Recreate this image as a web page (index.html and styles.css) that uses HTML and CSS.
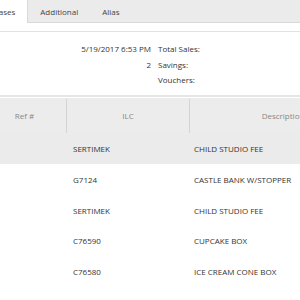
FILE: index.html
```html
<!DOCTYPE html>
<html>
<head>
<meta charset="utf-8">
<link rel="stylesheet" href="styles.css">
</head>
<body>
<div class="page">
  <div class="tabs">
    <div class="tab active">Purchases</div>
    <div class="tab">Additional</div>
    <div class="tab">Alias</div>
  </div>
  <div class="info">
    <div class="info-values">
      <div>5/19/2017 6:53 PM</div>
      <div>2</div>
      <div>&nbsp;</div>
    </div>
    <div class="info-labels">
      <div>Total Sales:</div>
      <div>Savings:</div>
      <div>Vouchers:</div>
    </div>
  </div>
  <div class="grid">
    <div class="row head">
      <div class="cell c-ref">Ref #</div>
      <div class="cell c-ilc">ILC</div>
      <div class="cell c-desc">Description</div>
    </div>
    <div class="row selected">
      <div class="cell c-ref"></div>
      <div class="cell c-ilc">SERTIMEK</div>
      <div class="cell c-desc">CHILD STUDIO FEE</div>
    </div>
    <div class="row">
      <div class="cell c-ref"></div>
      <div class="cell c-ilc">G7124</div>
      <div class="cell c-desc">CASTLE BANK W/STOPPER</div>
    </div>
    <div class="row">
      <div class="cell c-ref"></div>
      <div class="cell c-ilc">SERTIMEK</div>
      <div class="cell c-desc">CHILD STUDIO FEE</div>
    </div>
    <div class="row">
      <div class="cell c-ref"></div>
      <div class="cell c-ilc">C76590</div>
      <div class="cell c-desc">CUPCAKE BOX</div>
    </div>
    <div class="row">
      <div class="cell c-ref"></div>
      <div class="cell c-ilc">C76580</div>
      <div class="cell c-desc">ICE CREAM CONE BOX</div>
    </div>
  </div>
</div>
</body>
</html>
```
FILE: styles.css
```css
html, body {
  margin: 0;
  padding: 0;
  background: #ffffff;
}
body {
  width: 300px;
  height: 300px;
  overflow: hidden;
  font-family: "Open Sans", "Noto Sans", sans-serif;
  font-size: 8px;
  color: #333333;
}
.page {
  width: 300px;
  overflow: hidden;
}
.tabs {
  display: flex;
  height: 22px;
  background: #ebebeb;
  border-bottom: 1px solid #d9d9d9;
  margin-left: -35px;
}
.tab {
  flex-shrink: 0;
  display: flex;
  align-items: center;
  padding: 0 12px;
  height: 22px;
  color: #444444;
}
.tab.active {
  background: #ffffff;
  height: 23px;
  border-right: 1px solid #d9d9d9;
}
.info {
  margin-top: 8px;
  border-top: 1px solid #e2e2e2;
  border-bottom: 2px solid #e6e6e6;
  display: flex;
  padding: 9px 0 7px 0;
  line-height: 15.5px;
}
.info-values {
  width: 151px;
  text-align: right;
}
.info-labels {
  padding-left: 7px;
}
.grid {
  margin-top: 1px;
  margin-left: -17px;
  width: 420px;
}
.row {
  display: flex;
  height: 30.7px;
  align-items: stretch;
}
.row.head {
  height: 36px;
  background: #ececec;
  color: #888888;
}
.row.selected {
  background: #ebebeb;
}
.cell {
  flex-shrink: 0;
  display: flex;
  align-items: center;
  box-sizing: border-box;
  white-space: nowrap;
}
.c-ref { width: 84px; }
.c-ilc { width: 123px; padding-left: 6px; }
.c-desc { width: 200px; padding-left: 4px; }
.head .cell {
  justify-content: center;
  padding-left: 0;
  margin: 1px 0;
}
.head .c-ref, .head .c-ilc {
  border-right: 1px solid #d3d3d3;
}
.head .c-desc {
  width: 186px;
}
```
